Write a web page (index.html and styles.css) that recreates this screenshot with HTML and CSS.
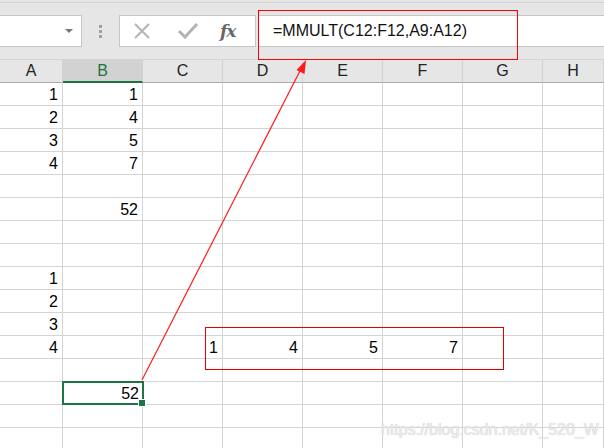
FILE: index.html
```html
<!DOCTYPE html>
<html>
<head>
<meta charset="utf-8">
<link rel="stylesheet" href="styles.css">
</head>
<body>
<div class="app">
  <div class="toolbar">
    <div class="namebox"><span class="caret"></span></div>
    <div class="grip"><i></i><i></i><i></i></div>
    <div class="fnbtns">
      <svg class="ico" width="20" height="20" viewBox="0 0 20 20"><path d="M3 3 L17 17 M17 3 L3 17" stroke="#b4b4b4" stroke-width="2" fill="none"/></svg>
      <svg class="ico" width="22" height="20" viewBox="0 0 22 20"><path d="M2 10 L8 16 L20 3" stroke="#b4b4b4" stroke-width="3" fill="none"/></svg>
      <span class="fx">fx</span>
    </div>
    <div class="formula">=MMULT(C12:F12,A9:A12)</div>
  </div>
  <div class="sheet">
    <div class="hd">A</div><div class="hd sel">B</div><div class="hd">C</div><div class="hd">D</div><div class="hd">E</div><div class="hd">F</div><div class="hd">G</div><div class="hd">H</div>
    <!-- row 1 -->
    <div class="c">1</div><div class="c">1</div><div class="c"></div><div class="c"></div><div class="c"></div><div class="c"></div><div class="c"></div><div class="c"></div>
    <!-- row 2 -->
    <div class="c">2</div><div class="c">4</div><div class="c"></div><div class="c"></div><div class="c"></div><div class="c"></div><div class="c"></div><div class="c"></div>
    <!-- row 3 -->
    <div class="c">3</div><div class="c">5</div><div class="c"></div><div class="c"></div><div class="c"></div><div class="c"></div><div class="c"></div><div class="c"></div>
    <!-- row 4 -->
    <div class="c">4</div><div class="c">7</div><div class="c"></div><div class="c"></div><div class="c"></div><div class="c"></div><div class="c"></div><div class="c"></div>
    <!-- row 5 -->
    <div class="c"></div><div class="c"></div><div class="c"></div><div class="c"></div><div class="c"></div><div class="c"></div><div class="c"></div><div class="c"></div>
    <!-- row 6 -->
    <div class="c"></div><div class="c">52</div><div class="c"></div><div class="c"></div><div class="c"></div><div class="c"></div><div class="c"></div><div class="c"></div>
    <!-- row 7 -->
    <div class="c"></div><div class="c"></div><div class="c"></div><div class="c"></div><div class="c"></div><div class="c"></div><div class="c"></div><div class="c"></div>
    <!-- row 8 -->
    <div class="c"></div><div class="c"></div><div class="c"></div><div class="c"></div><div class="c"></div><div class="c"></div><div class="c"></div><div class="c"></div>
    <!-- row 9 -->
    <div class="c">1</div><div class="c"></div><div class="c"></div><div class="c"></div><div class="c"></div><div class="c"></div><div class="c"></div><div class="c"></div>
    <!-- row 10 -->
    <div class="c">2</div><div class="c"></div><div class="c"></div><div class="c"></div><div class="c"></div><div class="c"></div><div class="c"></div><div class="c"></div>
    <!-- row 11 -->
    <div class="c">3</div><div class="c"></div><div class="c"></div><div class="c"></div><div class="c"></div><div class="c"></div><div class="c"></div><div class="c"></div>
    <!-- row 12 -->
    <div class="c">4</div><div class="c"></div><div class="c">1</div><div class="c">4</div><div class="c">5</div><div class="c">7</div><div class="c"></div><div class="c"></div>
    <!-- row 13 -->
    <div class="c"></div><div class="c"></div><div class="c"></div><div class="c"></div><div class="c"></div><div class="c"></div><div class="c"></div><div class="c"></div>
    <!-- row 14 -->
    <div class="c"></div><div class="c active">52<span class="handle"></span></div><div class="c"></div><div class="c"></div><div class="c"></div><div class="c"></div><div class="c"></div><div class="c"></div>
    <!-- row 15 -->
    <div class="c"></div><div class="c"></div><div class="c"></div><div class="c"></div><div class="c"></div><div class="c"></div><div class="c"></div><div class="c"></div>
    <!-- row 16 -->
    <div class="c"></div><div class="c"></div><div class="c"></div><div class="c"></div><div class="c"></div><div class="c"></div><div class="c"></div><div class="c"></div>
  </div>
  <div class="mark-formula"></div>
  <div class="mark-range"></div>
  <svg class="arrow" width="604" height="448" viewBox="0 0 604 448">
    <line x1="142" y1="380" x2="302" y2="67" stroke="#ff1a1a" stroke-width="1.2"/>
    <polygon points="306,60 304.5,74 296.5,70" fill="#ff1a1a"/>
  </svg>
  <div class="watermark">https://blog.csdn.net/K_520_W</div>
</div>
</body>
</html>
```
FILE: styles.css
```css
* { box-sizing: border-box; }
html, body { margin: 0; padding: 0; background: #fff; }
.app {
  position: relative;
  width: 604px;
  height: 448px;
  overflow: hidden;
  font-family: "Liberation Sans", Arial, sans-serif;
  color: #000;
}
.toolbar {
  height: 59px;
  background: #e6e6e6;
  border-top: 2px solid #e6e6e6;
  box-shadow: inset 0 1px 0 #d2d2d2;
  display: flex;
  align-items: flex-start;
  padding-top: 13px;
}
.namebox {
  width: 82px;
  height: 32px;
  background: #fff;
  border: 1px solid #c6c6c6;
  border-left: none;
  position: relative;
  display: flex;
  align-items: center;
  justify-content: flex-end;
  padding-right: 8px;
}
.caret {
  width: 0; height: 0;
  border-left: 4px solid transparent;
  border-right: 4px solid transparent;
  border-top: 4px solid #777;
}
.grip {
  width: 37px;
  height: 32px;
  display: flex;
  flex-direction: column;
  align-items: center;
  justify-content: center;
  gap: 2px;
}
.grip i {
  display: block;
  width: 3px;
  height: 3px;
  background: #a0a0a0;
}
.fnbtns {
  width: 137px;
  height: 32px;
  background: #fff;
  border: 1px solid #c6c6c6;
  display: flex;
  align-items: center;
  padding-left: 12px;
  gap: 25px;
}
.fx {
  font-family: "DejaVu Serif", "Liberation Serif", serif;
  font-style: italic;
  font-weight: bold;
  font-size: 17px;
  color: #666;
  margin-left: -4px;
  letter-spacing: -1px;
}
.formula {
  flex: 1;
  height: 32px;
  margin-left: 2px;
  background: #fff;
  border: 1px solid #c6c6c6;
  border-right: none;
  font-size: 16px;
  line-height: 30px;
  padding-left: 14px;
  color: #111;
}
.sheet {
  display: grid;
  grid-template-columns: 63px 80px 80px 80px 80px 80px 80px 61px;
  grid-auto-rows: 23px;
  border-top: 1px solid #d4d4d4;
}
.hd {
  background: #e6e6e6;
  border-right: 1px solid #d2d2d2;
  border-bottom: 1px solid #ababab;
  text-align: center;
  font-size: 16px;
  line-height: 22px;
  color: #222;
}
.hd.sel {
  background: #d2d2d2;
  border-bottom: 2px solid #217346;
  color: #217346;
}
.c {
  border-right: 1px solid #d4d4d4;
  border-bottom: 1px solid #d4d4d4;
  text-align: right;
  padding-right: 4px;
  font-size: 16px;
  line-height: 23px;
  position: relative;
}
.c.active {
  border: 2px solid #217346;
  margin: -1px 0 0 -1px;
  line-height: 21px;
  padding-right: 3px;
  width: 82px;
  height: 24px;
  z-index: 2;
}
.handle {
  position: absolute;
  right: -4px;
  bottom: -4px;
  width: 6px;
  height: 6px;
  background: #217346;
  border: 1px solid #fff;
  box-sizing: content-box;
}
.mark-formula {
  position: absolute;
  left: 258px;
  top: 10px;
  width: 260px;
  height: 50px;
  border: 1px solid #ff0000;
}
.mark-range {
  position: absolute;
  left: 205px;
  top: 327px;
  width: 299px;
  height: 43px;
  border: 1px solid #e00000;
}
.arrow {
  position: absolute;
  left: 0;
  top: 0;
  pointer-events: none;
  z-index: 3;
}
.watermark {
  position: absolute;
  left: 381px;
  top: 421px;
  font-size: 16px;
  color: #ececec;
  text-shadow: 0 0 1px #b8b8b8;
  white-space: nowrap;
}
```
